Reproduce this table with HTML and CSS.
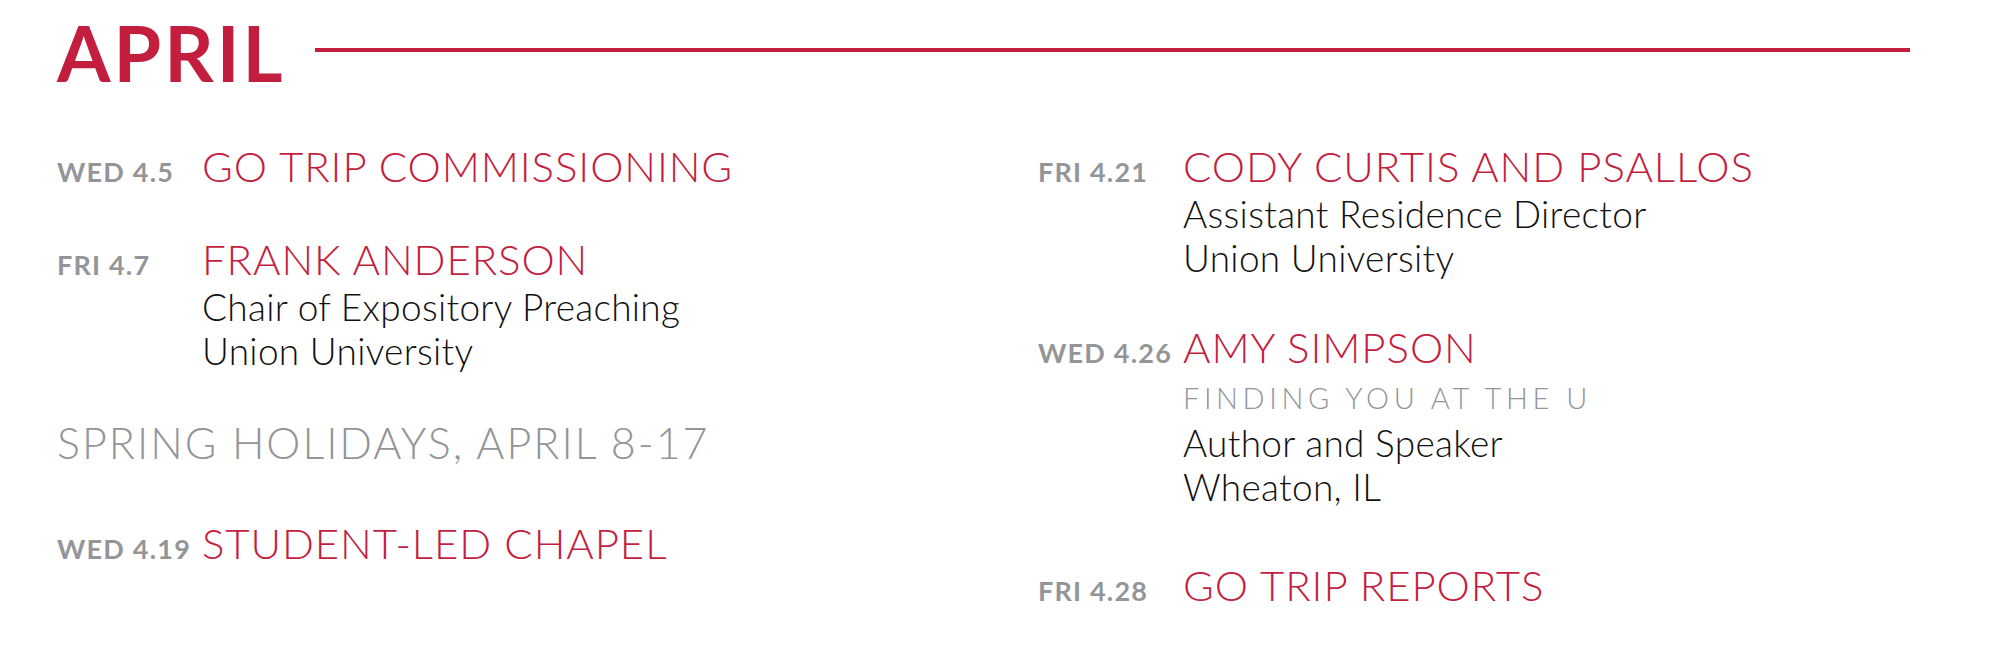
FILE: index.html
```html
<!DOCTYPE html>
<html lang="en">
<head>
<meta charset="utf-8">
<title>April</title>
<link rel="stylesheet" href="styles.css">
</head>
<body>
<div class="page">
  <header class="month">
    <h1 class="month-name">APRIL</h1>
    <div class="rule"></div>
  </header>
  <div class="columns">
    <div class="col">
      <div class="event">
        <div class="date">WED 4.5</div>
        <div class="info"><div class="title">GO TRIP COMMISSIONING</div></div>
      </div>
      <div class="event gap-s">
        <div class="date">FRI 4.7</div>
        <div class="info">
          <div class="title">FRANK ANDERSON</div>
          <div class="line">Chair of Expository Preaching</div>
          <div class="line">Union University</div>
        </div>
      </div>
      <div class="notice gap-m">SPRING HOLIDAYS, APRIL 8-17</div>
      <div class="event gap-l">
        <div class="date">WED 4.19</div>
        <div class="info"><div class="title">STUDENT-LED CHAPEL</div></div>
      </div>
    </div>
    <div class="col">
      <div class="event">
        <div class="date">FRI 4.21</div>
        <div class="info">
          <div class="title">CODY CURTIS AND PSALLOS</div>
          <div class="line">Assistant Residence Director</div>
          <div class="line">Union University</div>
        </div>
      </div>
      <div class="event gap-s">
        <div class="date">WED 4.26</div>
        <div class="info">
          <div class="title">AMY SIMPSON</div>
          <div class="subtitle">FINDING YOU AT THE U</div>
          <div class="line">Author and Speaker</div>
          <div class="line">Wheaton, IL</div>
        </div>
      </div>
      <div class="event gap-xl">
        <div class="date">FRI 4.28</div>
        <div class="info"><div class="title">GO TRIP REPORTS</div></div>
      </div>
    </div>
  </div>
</div>
</body>
</html>
```

FILE: styles.css
```css
html, body {
  margin: 0;
  padding: 0;
  background: #ffffff;
}

.page {
  width: 2000px;
  height: 658px;
  box-sizing: border-box;
  padding: 14px 90px 0 57px;
  font-family: "Lato", "Noto Sans", sans-serif;
  overflow: hidden;
}

.month {
  display: flex;
  align-items: center;
  gap: 30px;
}

.month-name {
  margin: 0;
  font-size: 77px;
  line-height: 1;
  font-weight: 700;
  letter-spacing: 3px;
  color: #c41e3f;
}

.rule {
  flex: 1;
  height: 4px;
  margin-bottom: 5px;
  background: #c41e3f;
}

.columns {
  display: grid;
  grid-template-columns: 981px 1fr;
  margin-top: 49px;
}

.col {
  display: flex;
  flex-direction: column;
}

.event {
  display: grid;
  grid-template-columns: 145px 1fr;
  align-items: baseline;
}

.gap-s { margin-top: 41px; }
.gap-m { margin-top: 44px; }
.gap-l { margin-top: 48px; }
.gap-xl { margin-top: 50px; }

.date {
  font-size: 27px;
  font-weight: 700;
  letter-spacing: 1.2px;
  color: #939598;
  white-space: nowrap;
}

.title {
  font-size: 42px;
  line-height: 52px;
  font-weight: 300;
  letter-spacing: 0.9px;
  color: #c41e3f;
  white-space: nowrap;
}

.line {
  font-size: 37px;
  line-height: 44px;
  font-weight: 300;
  letter-spacing: 0.3px;
  color: #111111;
  white-space: nowrap;
}

.subtitle {
  margin-top: 2px;
  font-size: 29px;
  line-height: 46px;
  font-weight: 300;
  letter-spacing: 4.6px;
  color: #939598;
  white-space: nowrap;
}

.notice {
  font-size: 43px;
  line-height: 52px;
  font-weight: 300;
  letter-spacing: 2px;
  color: #939598;
  white-space: nowrap;
}
```
